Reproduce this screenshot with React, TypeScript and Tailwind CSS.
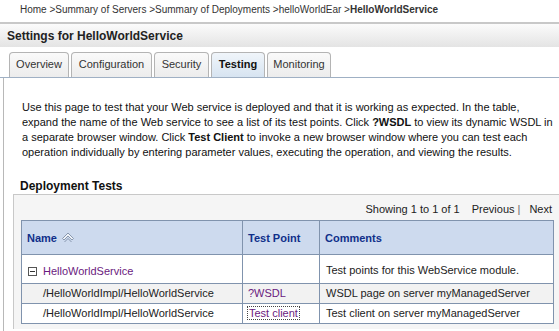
import React from 'react';

const font = 'font-["Liberation_Sans",Arial,sans-serif]';

function SortIcon() {
  return (
    <svg width="14" height="11" viewBox="0 0 14 11" className="inline-block ml-[4px] -mt-[3px]">
      <path d="M1.5 6.5 L7 1 L12.5 6.5 L11 8 L7 4 L3 8 Z" fill="#eef2f8" stroke="#7f8ea6" strokeWidth="0.9" />
      <path d="M3.5 10 L7 6.5 L10.5 10" fill="none" stroke="#7f8ea6" strokeWidth="0.9" />
    </svg>
  );
}

function Collapse() {
  return (
    <span className="inline-flex items-center justify-center w-[9px] h-[9px] border border-[#555] mr-[6px] bg-white">
      <span className="block w-[5px] h-[1px] bg-[#333]" />
    </span>
  );
}

const tabs = [
  { label: 'Overview', w: 'w-[60px]' },
  { label: 'Configuration', w: 'w-[81px]' },
  { label: 'Security', w: 'w-[55px]' },
  { label: 'Testing', w: 'w-[54px]', active: true },
  { label: 'Monitoring', w: 'w-[64px]' },
];

export default function App() {
  return (
    <div className={`w-[559px] h-[331px] overflow-hidden bg-white text-[#222] ${font}`}>
      {/* breadcrumb */}
      <div className="h-[22px] pl-[20px] pt-[2px] text-[10px] text-[#333]">
        Home &gt;Summary of Servers &gt;Summary of Deployments &gt;helloWorldEar &gt;
        <span className="font-bold">HelloWorldService</span>
      </div>

      {/* header */}
      <div className="h-[25px] border-t-2 border-[#c8c8c8] bg-gradient-to-b from-[#fbfbfb] to-[#e4e4e4] px-[7px] flex items-center text-[12px] font-bold text-[#222]">
        Settings for HelloWorldService
      </div>

      {/* tabs */}
      <div className="mt-[5px] flex gap-[2px] pl-[9px] border-b border-[#9fb0c4] h-[26px] items-end">
        {tabs.map((t) => (
          <div
            key={t.label}
            className={`${t.w} h-[25px] flex items-center justify-center pb-[2px] rounded-t-[4px] border border-b-0 border-[#b4b4b4] text-[11px] ${
              t.active
                ? 'bg-gradient-to-b from-[#f0f5fa] to-[#d7e4f1] font-bold text-[#111]'
                : 'bg-gradient-to-b from-[#fafafa] to-[#ececec] text-[#333]'
            }`}
          >
            {t.label}
          </div>
        ))}
      </div>

      {/* content */}
      <div className="ml-[3px] border-l border-[#b8b8b8] pt-[22px] h-[254px]">
        <p className="pl-[18px] pr-[6px] text-[11px] leading-[15px] text-[#111]">
          Use this page to test that your Web service is deployed and that it is working as expected. In the table,
          expand the name of the Web service to see a list of its test points. Click <b>?WSDL</b> to view its dynamic WSDL
          in a separate browser window. Click <b>Test Client</b> to invoke a new browser window where you can test each
          operation individually by entering parameter values, executing the operation, and viewing the results.
        </p>

        <div className="pl-[16px] mt-[17px] text-[12px] font-bold text-[#111]">Deployment Tests</div>

        <div className="ml-[9px] -mt-[1px] border-t border-l border-[#c8c8c8] bg-[#f5f5f5] pl-[7px] pr-[6px] pb-[5px]">
          <div className="h-[25px] pt-[3px] flex items-center justify-end text-[11px] text-[#222] pr-[1px]">
            <span>Showing 1 to 1 of 1</span>
            <span className="ml-[12px]">Previous</span>
            <span className="ml-[3px] text-[#666]">|</span>
            <span className="ml-[9px]">Next</span>
          </div>
          <table className="w-[532px] border-collapse text-[11px] table-fixed">
            <colgroup>
              <col className="w-[221px]" />
              <col className="w-[77px]" />
              <col className="w-[234px]" />
            </colgroup>
            <thead>
              <tr className="h-[34px] bg-[#cddaee] text-[#10308a] font-bold text-left">
                <th className="border border-[#8093ad] pl-[5px] pt-[2px]">
                  Name
                  <SortIcon />
                </th>
                <th className="border border-[#8093ad] pl-[5px] pt-[2px]">Test Point</th>
                <th className="border border-[#8093ad] pl-[5px] pt-[2px]">Comments</th>
              </tr>
            </thead>
            <tbody>
              <tr className="h-[29px] bg-white">
                <td className="border border-[#8093ad] pl-[6px] pt-[4px] text-[#6a1a7e]">
                  <span className="flex items-center">
                    <Collapse />
                    HelloWorldService
                  </span>
                </td>
                <td className="border border-[#8093ad]" />
                <td className="border border-[#8093ad] pl-[6px] pt-[2px] text-[#222]">
                  Test points for this WebService module.
                </td>
              </tr>
              <tr className="h-[20px] bg-[#f2f2f2]">
                <td className="border border-[#8093ad] pl-[21px] text-[#222]">/HelloWorldImpl/HelloWorldService</td>
                <td className="border border-[#8093ad] pl-[5px] text-[#6a1a7e]">?WSDL</td>
                <td className="border border-[#8093ad] pl-[6px] text-[#222]">WSDL page on server myManagedServer</td>
              </tr>
              <tr className="h-[20px] bg-white">
                <td className="border border-[#8093ad] pl-[21px] text-[#222]">/HelloWorldImpl/HelloWorldService</td>
                <td className="border border-[#8093ad] pl-[5px]">
                  <span className="text-[#6a1a7e] outline-1 outline-dotted outline-[#444] px-[1px]">Test client</span>
                </td>
                <td className="border border-[#8093ad] pl-[6px] text-[#222]">Test client on server myManagedServer</td>
              </tr>
            </tbody>
          </table>
        </div>
      </div>
    </div>
  );
}
